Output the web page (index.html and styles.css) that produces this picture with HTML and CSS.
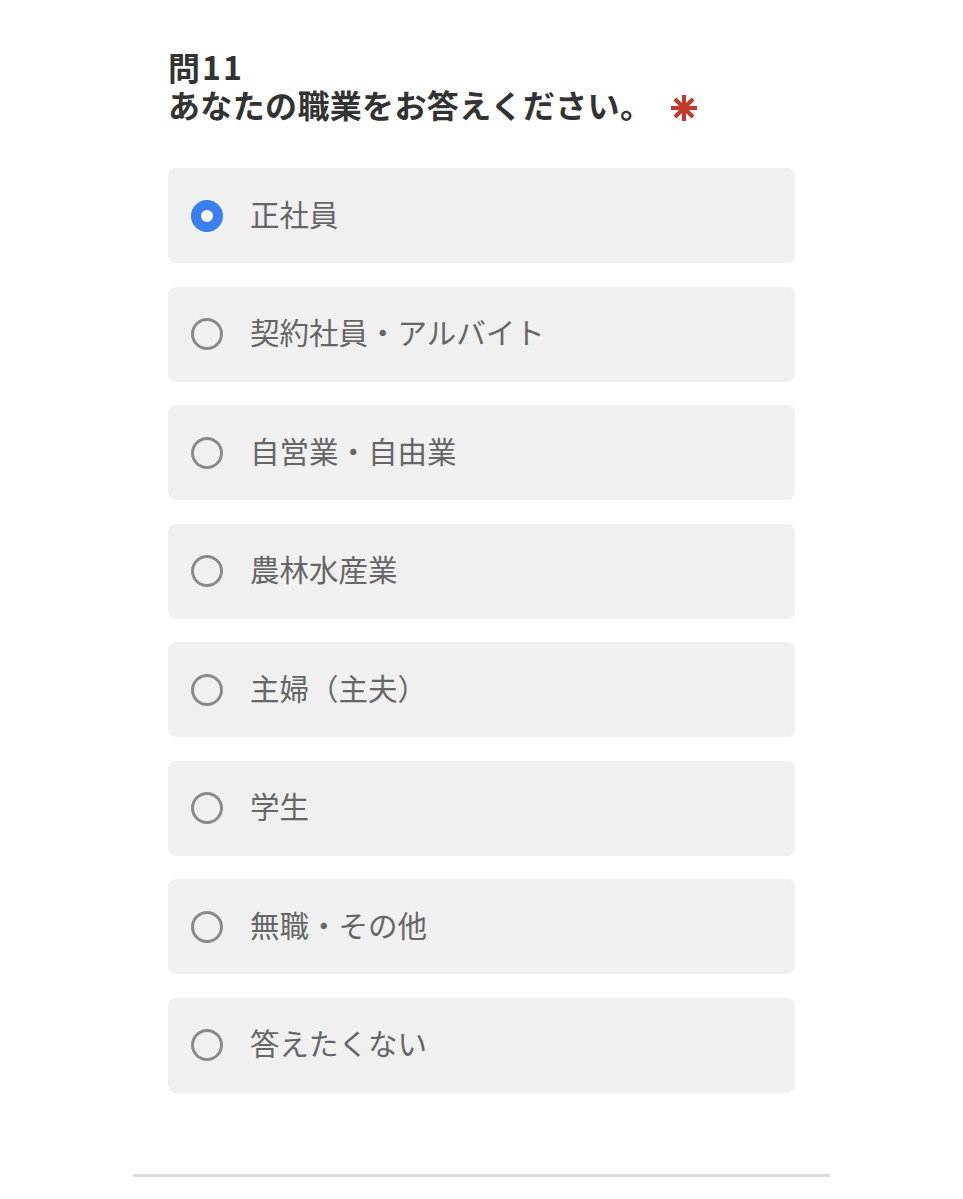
FILE: index.html
```html
<!DOCTYPE html>
<html lang="ja">
<head>
<meta charset="utf-8">
<link rel="stylesheet" href="styles.css">
</head>
<body>
<div class="page">
  <div class="question">
    <h2 class="title"><span class="num">問11</span><br>あなたの職業をお答えください。<svg class="req" viewBox="0 0 26 26" width="26" height="26" aria-label="必須"><g stroke="#c0392b" stroke-width="4" stroke-linecap="butt"><line x1="13" y1="0" x2="13" y2="26"/><line x1="0" y1="13" x2="26" y2="13"/><line x1="4" y1="4" x2="22" y2="22"/><line x1="22" y1="4" x2="4" y2="22"/></g></svg></h2>
    <div class="options">
      <label class="option"><span class="radio checked"></span><span class="label">正社員</span></label>
      <label class="option"><span class="radio"></span><span class="label">契約社員・アルバイト</span></label>
      <label class="option"><span class="radio"></span><span class="label">自営業・自由業</span></label>
      <label class="option"><span class="radio"></span><span class="label">農林水産業</span></label>
      <label class="option"><span class="radio"></span><span class="label">主婦（主夫）</span></label>
      <label class="option"><span class="radio"></span><span class="label">学生</span></label>
      <label class="option"><span class="radio"></span><span class="label">無職・その他</span></label>
      <label class="option"><span class="radio"></span><span class="label">答えたくない</span></label>
    </div>
  </div>
  <hr class="divider">
</div>
</body>
</html>
```
FILE: styles.css
```css
html, body {
  margin: 0;
  padding: 0;
  background: #ffffff;
}
body {
  font-family: "Noto Sans CJK JP", "Noto Sans", sans-serif;
  color: #333;
}
.page {
  width: 963px;
  padding-top: 47px;
}
.question {
  width: 627px;
  margin: 0 auto;
}
.title {
  margin: 0;
  font-size: 32px;
  line-height: 38px;
  font-weight: 700;
  color: #333;
  letter-spacing: 0.35px;
}
.num {
  letter-spacing: 2px;
}
.req {
  margin-left: 19px;
  vertical-align: -3px;
}
.options {
  margin-top: 45px;
  display: flex;
  flex-direction: column;
  gap: 23.5px;
}
.option {
  display: flex;
  align-items: center;
  height: 95px;
  background: #f0f0f0;
  border-radius: 8px;
  padding-left: 23px;
  box-sizing: border-box;
}
.radio {
  width: 32px;
  height: 32px;
  box-sizing: border-box;
  border: 3px solid #8a8a8a;
  border-radius: 50%;
  flex: none;
}
.radio.checked {
  border: 10px solid #3a7ff0;
  background: #fff;
}
.label {
  margin-left: 27px;
  padding-bottom: 4px;
  font-size: 29.5px;
  color: #666;
  line-height: 1;
}
.divider {
  width: 697px;
  margin: 81px auto 0;
  border: none;
  height: 3px;
  background: #dcdcdc;
}
```
